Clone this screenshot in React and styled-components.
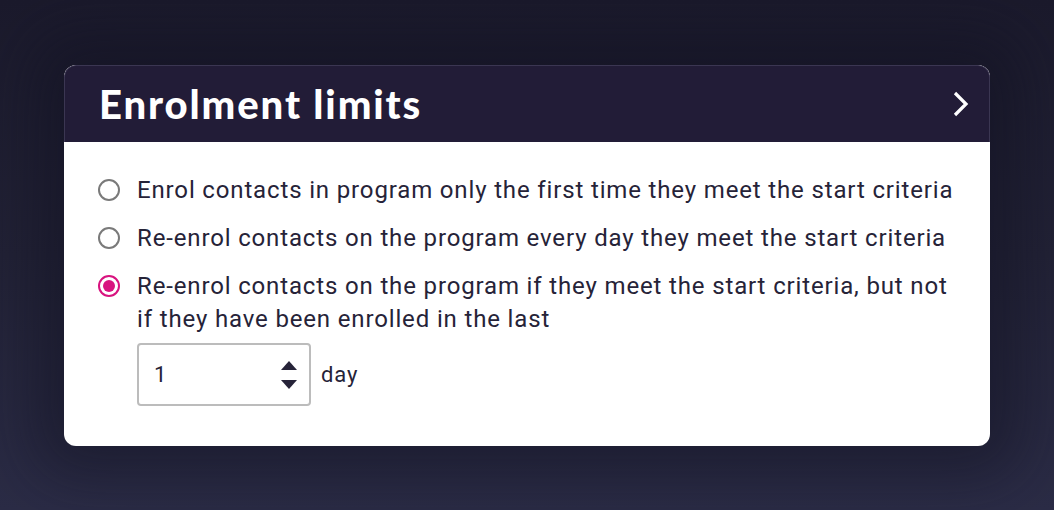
import React, { useState } from 'react'
import styled, { createGlobalStyle } from 'styled-components'

const Global = createGlobalStyle`
    html, body { margin: 0; padding: 0; }
    body {
        width: 1054px;
        height: 510px;
        overflow: hidden;
        background: linear-gradient(180deg, #1b1a2c 0%, #222236 50%, #2b2c46 100%);
        font-family: Roboto, "Noto Sans", sans-serif;
    }
`

const Page = styled.div`
    height: 510px;
    box-sizing: border-box;
    padding: 65px 64px 0 64px;
`

const Card = styled.div`
    width: 926px;
    border-radius: 12px;
    overflow: hidden;
    background: #ffffff;
    box-shadow: 0 0 60px 30px rgba(16, 15, 30, 0.45);
`

const Header = styled.div`
    height: 77px;
    box-sizing: border-box;
    background: #221c37;
    border: 1px solid #3b3652;
    border-bottom: none;
    border-radius: 12px 12px 0 0;
    display: flex;
    align-items: center;
    justify-content: space-between;
    padding: 0 16px 0 34px;
`

const Title = styled.h2`
    margin: 0;
    color: #ffffff;
    font-family: Lato, "Noto Sans", sans-serif;
    font-weight: 900;
    font-size: 40px;
    letter-spacing: 1.9px;
`

const Toggle = styled.button`
    background: none;
    border: none;
    padding: 0;
    width: 24px;
    height: 24px;
    display: flex;
    align-items: center;
    justify-content: center;
    cursor: pointer;
`

const Body = styled.div`
    padding: 32px 34px 40px 34px;
    display: flex;
    flex-direction: column;
    gap: 15px;
`

const Option = styled.label`
    display: flex;
    align-items: flex-start;
    gap: 17px;
    color: #262338;
    font-size: 24px;
    letter-spacing: 0.85px;
    line-height: 33px;
    cursor: pointer;
`

const Radio = styled.span`
    flex: none;
    width: 22px;
    height: 22px;
    margin-top: 5px;
    box-sizing: border-box;
    border-radius: 50%;
    border: 2px solid ${p => (p.$checked ? '#d8137f' : '#7a7a7a')};
    display: flex;
    align-items: center;
    justify-content: center;
    &::after {
        content: '';
        width: 12px;
        height: 12px;
        border-radius: 50%;
        background: #d8137f;
        display: ${p => (p.$checked ? 'block' : 'none')};
    }
`

const OptionText = styled.div`
    display: flex;
    flex-direction: column;
`

const Limit = styled.div`
    display: flex;
    align-items: center;
    gap: 10px;
    margin-top: 7px;
`

const NumberBox = styled.div`
    width: 174px;
    height: 63px;
    box-sizing: border-box;
    border: 2px solid #bcbcbc;
    border-radius: 4px;
    display: flex;
    align-items: center;
    justify-content: space-between;
    padding: 0 12px 0 15px;
    font-size: 22px;
    color: #262338;
`

const Spinner = styled.div`
    display: flex;
    flex-direction: column;
    gap: 10px;
    margin-top: 1px;
`

const Unit = styled.span`
    color: #262338;
    font-size: 22px;
`

const options = [
    'Enrol contacts in program only the first time they meet the start criteria',
    'Re-enrol contacts on the program every day they meet the start criteria',
    'Re-enrol contacts on the program if they meet the start criteria, but not if they have been enrolled in the last',
]

const App = () => {
    const [selected, setSelected] = useState(2)
    return (
        <Page>
            <Global />
            <Card>
                <Header>
                    <Title>Enrolment limits</Title>
                    <Toggle aria-label="Expand">
                        <svg width="20" height="28" viewBox="0 0 20 28">
                            <path d="M4 3 L15 14 L4 25" fill="none" stroke="#ffffff" strokeWidth="3.2" strokeLinecap="butt" />
                        </svg>
                    </Toggle>
                </Header>
                <Body>
                    {options.map((text, i) => (
                        <Option key={i} onClick={() => setSelected(i)}>
                            <Radio $checked={selected === i} />
                            <OptionText>
                                <span>{text}</span>
                                {i === 2 && (
                                    <Limit>
                                        <NumberBox>
                                            <span>1</span>
                                            <Spinner>
                                                <svg width="16" height="9" viewBox="0 0 16 9"><path d="M8 0 L16 9 L0 9 Z" fill="#262338" /></svg>
                                                <svg width="16" height="9" viewBox="0 0 16 9"><path d="M0 0 L16 0 L8 9 Z" fill="#262338" /></svg>
                                            </Spinner>
                                        </NumberBox>
                                        <Unit>day</Unit>
                                    </Limit>
                                )}
                            </OptionText>
                        </Option>
                    ))}
                </Body>
            </Card>
        </Page>
    )
}

export default App
